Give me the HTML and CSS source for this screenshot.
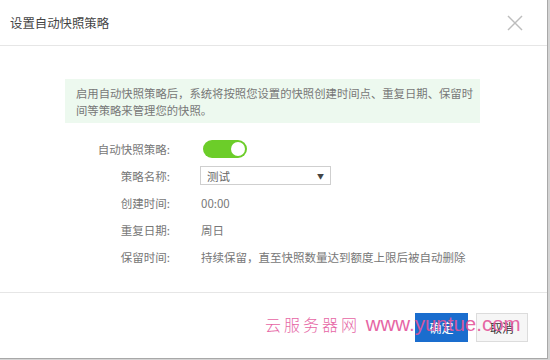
FILE: index.html
```html
<!DOCTYPE html>
<html lang="zh-CN">
<head>
    <meta charset="UTF-8">
    <title>设置自动快照策略</title>
    <link rel="stylesheet" href="styles.css">
</head>
<body>
    <div class="dialog">
        <div class="dialog-header">
            <span class="dialog-title">设置自动快照策略</span>
            <svg class="close-btn" width="16" height="16" viewBox="0 0 16 16">
                <line x1="1" y1="1" x2="15" y2="15" stroke="#bdbdbd" stroke-width="1.5"></line>
                <line x1="15" y1="1" x2="1" y2="15" stroke="#bdbdbd" stroke-width="1.5"></line>
            </svg>
        </div>
        <div class="dialog-body">
            <div class="notice">启用自动快照策略后，系统将按照您设置的快照创建时间点、重复日期、保留时间等策略来管理您的快照。</div>
            <div class="form">
                <span class="label">自动快照策略:</span>
                <span class="switch"><span class="knob"></span></span>

                <span class="label">策略名称:</span>
                <div class="select">
                    <span>测试</span>
                    <span class="arrow">▼</span>
                </div>

                <span class="label">创建时间:</span>
                <span class="value">00:00</span>

                <span class="label">重复日期:</span>
                <span class="value">周日</span>

                <span class="label">保留时间:</span>
                <span class="value">持续保留，直至快照数量达到额度上限后被自动删除</span>
            </div>
        </div>
        <div class="dialog-footer">
            <button class="btn btn-primary">确定</button>
            <button class="btn">取消</button>
            <div class="watermark"><span class="wm-cn">云服务器网</span> www.yuntue.com</div>
        </div>
    </div>
</body>
</html>
```

FILE: styles.css
```css
body {
    margin: 0;
    background-color: #d4d4d4;
    font-family: "Noto Sans CJK SC", "Liberation Sans", sans-serif;
}
.dialog {
    width: 547px;
    height: 358px;
    background-color: #fff;
    border-right: 1px solid #a8a8a8;
    border-bottom: 1px solid #a8a8a8;
    display: flex;
    flex-direction: column;
}
.dialog-header {
    height: 45px;
    border-bottom: 1px solid #e6e6e6;
    display: flex;
    align-items: center;
    justify-content: space-between;
    padding: 0 24px 0 10px;
}
.dialog-title {
    font-size: 12.4px;
    color: #444;
}
.dialog-body {
    flex-grow: 1;
    padding-top: 33px;
}
.notice {
    width: 398px;
    margin-left: 65px;
    padding: 6px 6px 5px 11px;
    background-color: #edf9ef;
    color: #777;
    font-size: 11.35px;
    line-height: 16.5px;
}
.form {
    display: grid;
    grid-template-columns: 170px auto;
    grid-auto-rows: 27px;
    column-gap: 31px;
    align-items: center;
    margin-top: 12px;
    font-size: 11.5px;
    color: #777;
}
.label {
    text-align: right;
}
.switch {
    width: 44px;
    height: 18px;
    border-radius: 9px;
    background-color: #6ccd29;
    display: flex;
    align-items: center;
    justify-content: flex-end;
    padding-right: 2px;
    box-sizing: border-box;
    margin-left: 2px;
}
.knob {
    width: 14px;
    height: 14px;
    border-radius: 50%;
    background-color: #fff;
}
.select {
    width: 131px;
    height: 19px;
    box-sizing: border-box;
    border: 1px solid #cfcfcf;
    margin-left: -1px;
    display: flex;
    align-items: center;
    justify-content: space-between;
    padding: 0 6px 0 6px;
    color: #666;
}
.arrow {
    font-size: 7px;
    color: #444;
}
.dialog-footer {
    height: 65px;
    border-top: 1px solid #e6e6e6;
    display: flex;
    justify-content: flex-end;
    align-items: center;
    gap: 8px;
    padding: 0 19px 0 0;
    position: relative;
}
.btn {
    width: 52px;
    height: 29px;
    border: 1px solid #dcdcdc;
    background-color: #f6f6f6;
    color: #333;
    font-family: "Noto Sans CJK SC", sans-serif;
    font-size: 12px;
    padding: 0;
    margin-top: 3px;
}
.btn-primary {
    width: 53px;
    background-color: #1a6dce;
    border-color: #1a6dce;
    color: #fff;
}
.watermark {
    position: absolute;
    left: 265px;
    top: 19px;
    color: #e4559b;
    font-family: "Liberation Sans", sans-serif;
    font-size: 20.5px;
    white-space: nowrap;
    opacity: 0.9;
}
.wm-cn {
    font-family: "Noto Sans CJK SC", sans-serif;
    font-size: 16px;
    letter-spacing: 3px;
    font-weight: 300;
}
```
